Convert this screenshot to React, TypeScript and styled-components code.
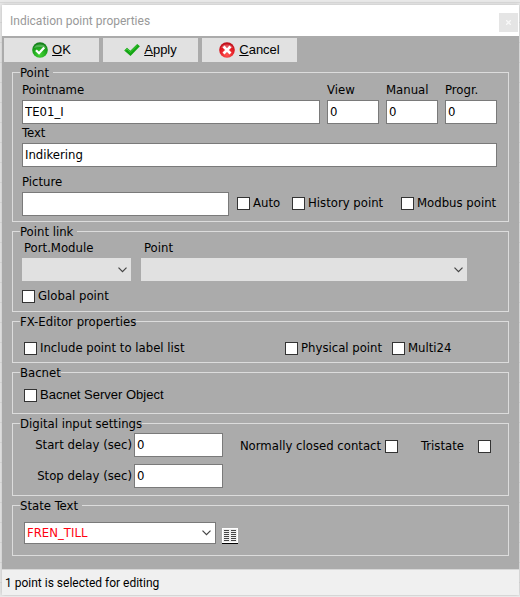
import React, { useState } from "react";
import styled, { createGlobalStyle } from "styled-components";

const Global = createGlobalStyle`
  * { box-sizing: border-box; }
  body {
    margin: 0;
    background: repeating-linear-gradient(#e9e9e9 0 2px, #d9d9d9 2px 3px, #e9e9e9 3px 20px);
    color: #000;
    font: 13px/16px "DejaVu Sans Condensed", "DejaVu Sans", sans-serif;
  }
  input, select, button { font: inherit; color: inherit; margin: 0; }
`;

const Dialog = styled.main`
  margin: 5px 1px 1px 2px;
  background: #ababab;
  box-shadow: 0 0 4px #bbb;
`;

const TitleBar = styled.header`
  display: flex;
  align-items: center;
  justify-content: space-between;
  height: 31px;
  padding: 0 1px 0 8px;
  background: #fff;
`;

const Title = styled.h1`
  margin: 0;
  color: #999;
  font: 12px/16px Roboto, sans-serif;
`;

const CloseButton = styled.button`
  width: 19px;
  height: 19px;
  margin-top: 3px;
  padding: 0;
  border: 0;
  background: #e5e5e5;
  display: grid;
  place-items: center;
`;

const Toolbar = styled.div`
  display: flex;
  gap: 4px;
  padding: 2px;
`;

const ToolButton = styled.button`
  display: flex;
  align-items: center;
  justify-content: center;
  gap: 4px;
  width: 95px;
  height: 24px;
  padding: 0;
  border: 0;
  background: #e1e1e1;
  font: 13px/16px "Liberation Sans", Arial, sans-serif;
`;

const Groups = styled.form`
  display: flex;
  flex-direction: column;
  gap: 1px;
  padding: 0 10px 13px;
`;

const Group = styled.fieldset`
  min-width: 0;
  margin: 0;
  padding: 0;
  border: 1px solid #dcdcdc;
`;

const GroupBody = styled.div<{ $pad: string }>`
  padding: ${(p) => p.$pad};
`;

const Legend = styled.legend<{ $right?: number }>`
  margin-left: 7px;
  padding: 0 ${(p) => p.$right ?? 0}px 0 0;
  line-height: 17px;
`;

const NameGrid = styled.div`
  display: grid;
  grid-template-columns: minmax(0, 1fr) repeat(3, 52px);
  gap: 7px;
`;

const Row = styled.div<{ $top?: number; $gap?: number }>`
  display: flex;
  align-items: flex-end;
  gap: ${(p) => p.$gap ?? 8}px;
  margin-top: ${(p) => p.$top ?? 0}px;
`;

const Field = styled.label<{ $width?: number; $indent?: number }>`
  display: flex;
  flex-direction: column;
  gap: 2px;
  min-width: 0;
  ${(p) => (p.$width ? `width: ${p.$width}px;` : "flex: 1;")}
  & > span:first-child { padding-left: ${(p) => p.$indent ?? 0}px; }
`;

const TextInput = styled.input`
  width: 100%;
  height: 24px;
  padding: 0 2px 2px;
  border: 1px solid #7a7a7a;
  border-radius: 0;
  background: #fff;
`;

const ComboBox = styled.div<{ $framed?: boolean }>`
  display: grid;
  align-items: center;
  width: 100%;
  height: ${(p) => (p.$framed ? 22 : 23)}px;
  border: ${(p) => (p.$framed ? "1px solid #7a7a7a" : "0")};
  background: ${(p) => (p.$framed ? "#fff" : "#e1e1e1")};
  & > * { grid-area: 1 / 1; }
  & > svg { justify-self: end; margin-right: 4px; pointer-events: none; }
`;

const ComboSelect = styled.select`
  appearance: none;
  width: 100%;
  height: 100%;
  padding: 0 18px 0 2px;
  border: 0;
  border-radius: 0;
  background: transparent;
`;

const StateSelect = styled(ComboSelect)`
  color: #ff0010;
`;

const Check = styled.label<{ $width?: number; $arial?: boolean }>`
  display: flex;
  align-items: center;
  gap: 3px;
  flex: none;
  height: 16px;
  white-space: nowrap;
  ${(p) => p.$width && `width: ${p.$width}px;`}
  ${(p) => p.$arial && `font: 13px/16px "Liberation Sans", Arial, sans-serif;`}
`;

const Box = styled.input.attrs({ type: "checkbox" })`
  appearance: none;
  flex: none;
  width: 13px;
  height: 13px;
  border: 1px solid #333;
  background: #fff;
  &:checked { background: #333; box-shadow: inset 0 0 0 2px #fff; }
`;

const CheckRow = styled(Row)`
  gap: 0;
`;

const PictureChecks = styled.div`
  display: flex;
  padding-bottom: 5px;
`;

const Spacer = styled.span`
  flex: 1;
`;

const DelayLayout = styled.div`
  display: flex;
  align-items: flex-start;
  justify-content: space-between;
`;

const Delays = styled.div`
  display: grid;
  gap: 7px;
`;

const Delay = styled.label`
  display: grid;
  grid-template-columns: 119px 89px;
  align-items: center;
  column-gap: 2px;
  & > span { text-align: right; }
`;

const InputModes = styled.div`
  display: flex;
  gap: 23px;
  padding-top: 5px;
`;

const TrailingCheck = styled(Check)<{ $gap: number }>`
  gap: ${(p) => p.$gap}px;
`;

const StateCombo = styled.div`
  width: 192px;
`;

const TableButton = styled.button`
  width: 16px;
  height: 16px;
  padding: 0;
  border: 0;
  background: #fff;
  & > svg { display: block; }
`;

const StatusBar = styled.footer`
  height: 26px;
  padding: 4px 3px;
  border-top: 1px solid #d7d7d7;
  background: #f0f0f0;
  font: 12px/18px Roboto, sans-serif;
`;

const Chevron = () => (
  <svg width="9" height="6" viewBox="0 0 9 6" fill="none" stroke="#444" strokeWidth="1.2" aria-hidden>
    <path d="M0.5 0.7 4.5 4.7 8.5 0.7" />
  </svg>
);

const OkIcon = () => (
  <svg width="16" height="16" viewBox="0 0 16 16" aria-hidden>
    <defs>
      <radialGradient id="ok" cx=".5" cy=".8" r=".8">
        <stop offset="0" stopColor="#43d235" />
        <stop offset=".6" stopColor="#1ba31b" />
        <stop offset="1" stopColor="#13791b" />
      </radialGradient>
    </defs>
    <circle cx="8" cy="8" r="7.8" fill="url(#ok)" />
    <path d="M2 6a6.3 5 0 0 1 12 0q-6-2-12 0" fill="#fff" opacity=".25" />
    <path d="m4 8.2 3 3 5.2-5.8" fill="none" stroke="#fff" strokeWidth="2.3" />
  </svg>
);

const ApplyIcon = () => (
  <svg width="16" height="16" viewBox="0 0 16 16" aria-hidden>
    <path d="M.2 8.6 3 5.8l3.3 3L13.2 2l2.7 2.2L6.5 14z" fill="#14a514" />
    <path d="M1.6 8.5 3 7.1l3.3 3.1L13.4 3.2" fill="none" stroke="#45d13c" strokeWidth=".9" />
  </svg>
);

const CancelIcon = () => (
  <svg width="16" height="16" viewBox="0 0 16 16" aria-hidden>
    <defs>
      <radialGradient id="cancel" cx=".5" cy=".8" r=".8">
        <stop offset="0" stopColor="#ff5551" />
        <stop offset=".6" stopColor="#e31c24" />
        <stop offset="1" stopColor="#b80d19" />
      </radialGradient>
    </defs>
    <circle cx="8" cy="8" r="7.8" fill="url(#cancel)" />
    <path d="M2 6a6.3 5 0 0 1 12 0q-6-2-12 0" fill="#fff" opacity=".25" />
    <path d="m4.5 4.5 7 7m0-7-7 7" stroke="#fff" strokeWidth="2.8" />
  </svg>
);

const TableIcon = () => (
  <svg width="16" height="16" viewBox="0 0 16 16" shapeRendering="crispEdges" aria-hidden>
    <path d="M0 0h16v15H0z" fill="#fff" />
    <path d="M1 1h14v13H1z" fill="#eee" />
    <path
      d="M2 2.5h5M9 2.5h5M2 4.5h5M9 4.5h5M2 6.5h5M9 6.5h5M2 8.5h5M9 8.5h5M2 10.5h5M9 10.5h5M2 12.5h5M9 12.5h5"
      stroke="#444"
    />
    <path d="M0 15h16v1H0z" fill="#000" />
  </svg>
);

function Combo({ label }: { label: string }) {
  return (
    <ComboBox>
      <ComboSelect aria-label={label} />
      <Chevron />
    </ComboBox>
  );
}

function CheckItem({ text, width, arial }: { text: string; width?: number; arial?: boolean }) {
  return (
    <Check $width={width} $arial={arial}>
      <Box />
      <span>{text}</span>
    </Check>
  );
}

function TextField({ label, value, width }: { label: string; value: string; width?: number }) {
  const [text, setText] = useState(value);
  return (
    <Field $width={width}>
      <span>{label}</span>
      <TextInput value={text} onChange={(e) => setText(e.target.value)} />
    </Field>
  );
}

export default function App() {
  return (
    <>
      <Global />
      <Dialog>
        <TitleBar>
          <Title>Indication point properties</Title>
          <CloseButton aria-label="Close">
            <svg width="5" height="5" viewBox="0 0 5 5" stroke="#f8f8f8" strokeWidth="1.3" aria-hidden>
              <path d="m0 0 5 5M5 0 0 5" />
            </svg>
          </CloseButton>
        </TitleBar>
        <Toolbar>
          <ToolButton><OkIcon /><span><u>O</u>K</span></ToolButton>
          <ToolButton><ApplyIcon /><span><u>A</u>pply</span></ToolButton>
          <ToolButton><CancelIcon /><span><u>C</u>ancel</span></ToolButton>
        </Toolbar>
        <Groups>
          <Group>
            <Legend $right={4}>Point</Legend>
            <GroupBody $pad="1px 11px 5px 9px">
              <NameGrid>
                <TextField label="Pointname" value="TE01_I" />
                <TextField label="View" value="0" />
                <TextField label="Manual" value="0" />
                <TextField label="Progr." value="0" />
              </NameGrid>
              <Row $top={1}>
                <TextField label="Text" value="Indikering" />
              </Row>
              <Row $top={7}>
                <TextField label="Picture" value="" />
                <PictureChecks>
                  <CheckItem text="Auto" width={55} />
                  <CheckItem text="History point" width={109} />
                  <CheckItem text="Modbus point" width={96} />
                </PictureChecks>
              </Row>
            </GroupBody>
          </Group>

          <Group>
            <Legend $right={4}>Point link</Legend>
            <GroupBody $pad="0 41px 7px 9px">
              <Row $gap={10}>
                <Field $width={109} $indent={2}>
                  <span>Port.Module</span>
                  <Combo label="Port.Module" />
                </Field>
                <Field $indent={3}>
                  <span>Point</span>
                  <Combo label="Point" />
                </Field>
              </Row>
              <CheckRow $top={7}>
                <CheckItem text="Global point" />
              </CheckRow>
            </GroupBody>
          </Group>

          <Group>
            <Legend>FX-Editor properties</Legend>
            <GroupBody $pad="10px 11px 6px 11px">
              <CheckRow>
                <CheckItem text="Include point to label list" />
                <Spacer />
                <CheckItem text="Physical point" width={107} />
                <CheckItem text="Multi24" width={105} />
              </CheckRow>
            </GroupBody>
          </Group>

          <Group>
            <Legend>Bacnet</Legend>
            <GroupBody $pad="6px 11px 10px 11px">
              <CheckRow>
                <CheckItem text="Bacnet Server Object" arial />
              </CheckRow>
            </GroupBody>
          </Group>

          <Group>
            <Legend>Digital input settings</Legend>
            <GroupBody $pad="1px 17px 7px 0">
              <DelayLayout>
                <Delays>
                  <Delay>
                    <span>Start delay (sec)</span>
                    <TextInput defaultValue="0" />
                  </Delay>
                  <Delay>
                    <span>Stop delay (sec)</span>
                    <TextInput defaultValue="0" />
                  </Delay>
                </Delays>
                <InputModes>
                  <TrailingCheck $gap={4}>
                    <span>Normally closed contact</span>
                    <Box />
                  </TrailingCheck>
                  <TrailingCheck $gap={14}>
                    <span>Tristate</span>
                    <Box />
                  </TrailingCheck>
                </InputModes>
              </DelayLayout>
            </GroupBody>
          </Group>

          <Group>
            <Legend $right={4}>State Text</Legend>
            <GroupBody $pad="8px 11px 11px 11px">
              <Row $gap={6}>
                <StateCombo>
                  <ComboBox $framed>
                    <StateSelect aria-label="State Text">
                      <option>FREN_TILL</option>
                    </StateSelect>
                    <Chevron />
                  </ComboBox>
                </StateCombo>
                <TableButton type="button" aria-label="State text table">
                  <TableIcon />
                </TableButton>
              </Row>
            </GroupBody>
          </Group>
        </Groups>
        <StatusBar>1 point is selected for editing</StatusBar>
      </Dialog>
    </>
  );
}
